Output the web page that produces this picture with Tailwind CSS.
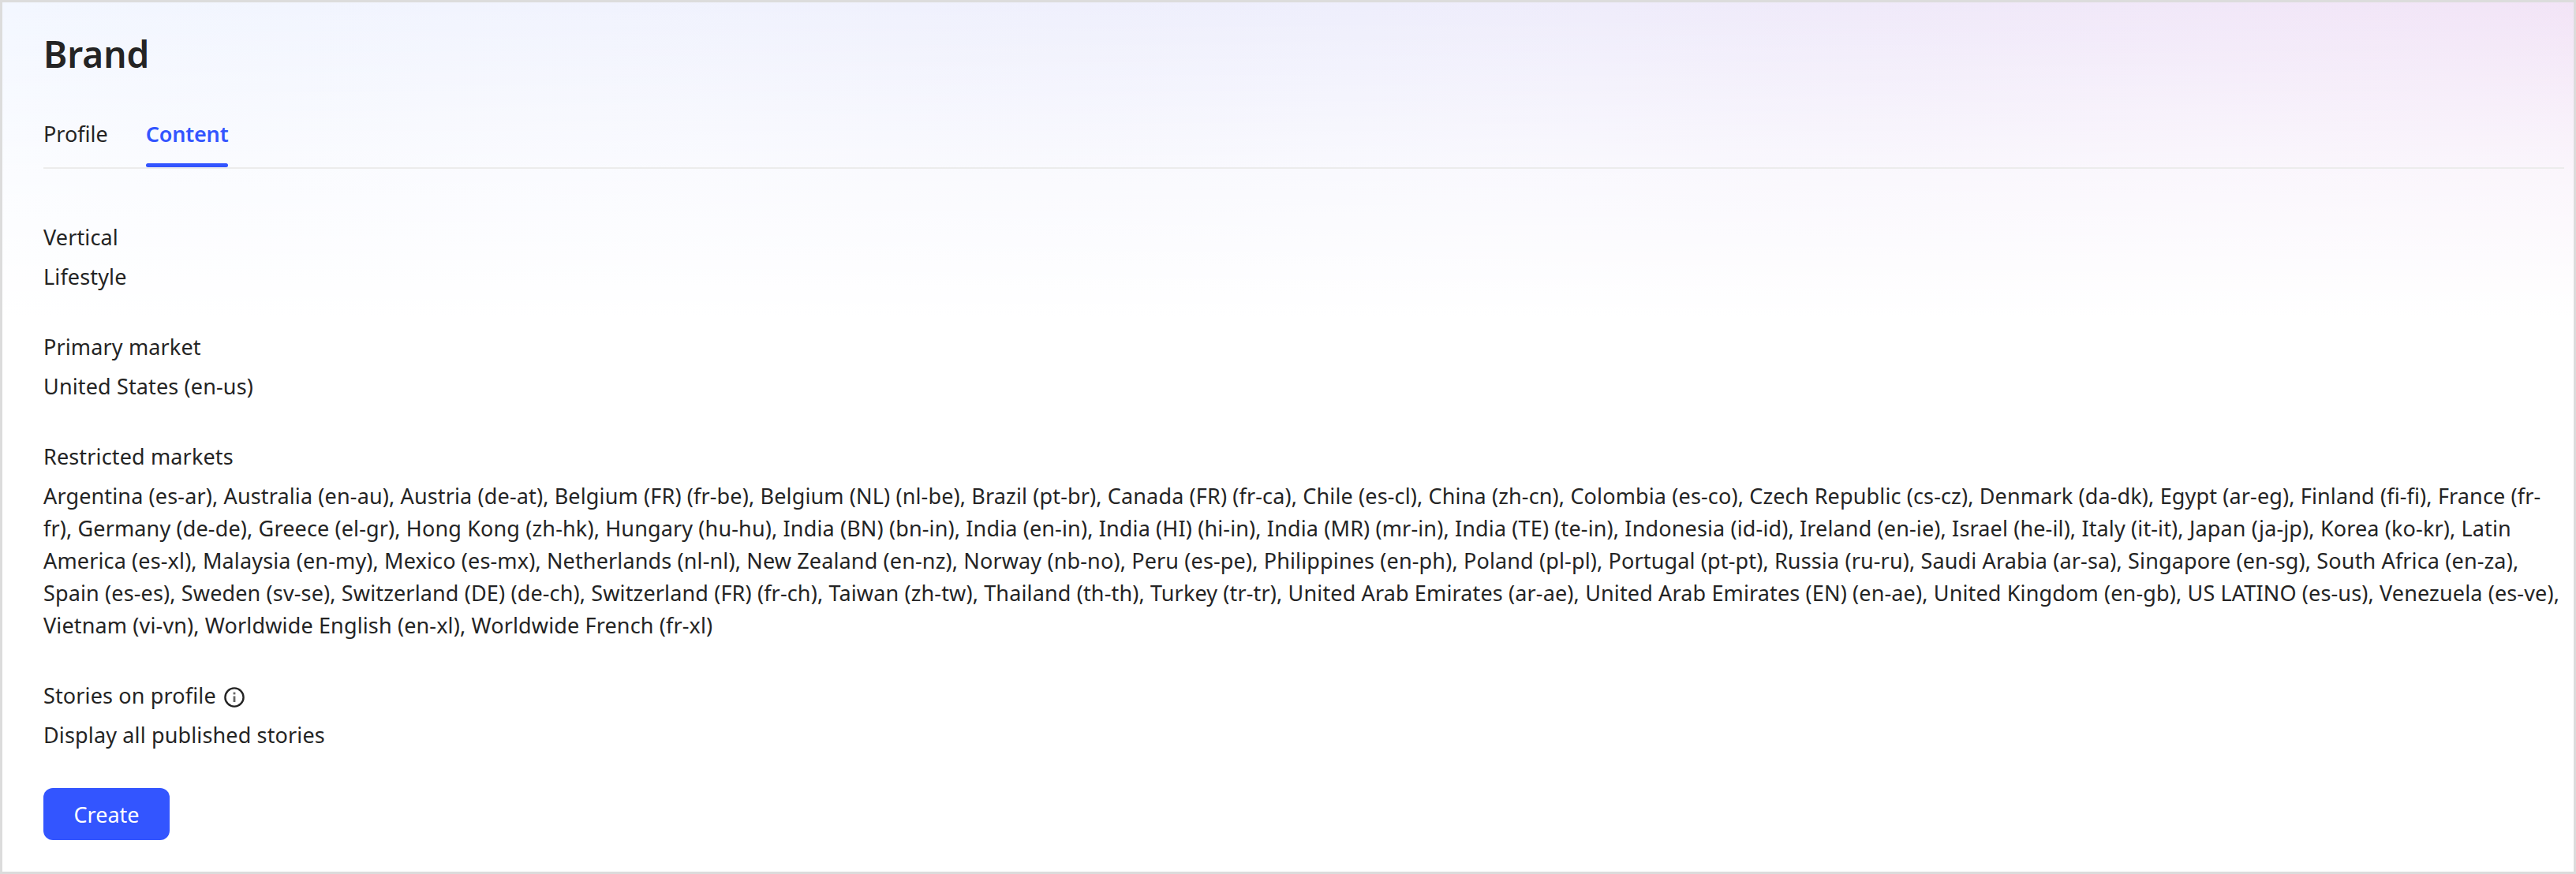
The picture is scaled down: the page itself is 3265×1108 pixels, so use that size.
<!DOCTYPE html>
<html lang="en">
<head>
    <meta charset="UTF-8">
    <title>Brand</title>
    <script src="https://cdn.jsdelivr.net/npm/@tailwindcss/browser@4"></script>
</head>
<body class="bg-white">
<div class="h-[1108px] border-[3px] border-[#dcdcdc] font-['Noto_Sans',sans-serif] text-[#242424] bg-[linear-gradient(to_bottom,transparent,#ffffffa6_212px,white_400px),linear-gradient(100deg,#f3f7ff,#eeeefc_50%,#f3e3f6)]">
    <div class="pl-[52px] pr-[12px]">
        <h1 class="pt-[34px] h-[122px] text-[46px] leading-[62px] font-semibold">Brand</h1>
        <div class="flex gap-12 h-[89px] border-b-2 border-[#ececec] text-[27px]">
            <button class="h-[87px] pt-[3px] leading-[38px] text-left self-start">Profile</button>
            <button class="relative h-[87px] pt-[3px] leading-[38px] text-left self-start font-semibold text-[#3355ff] tracking-[-0.2px]">Content
                <span class="absolute left-0 right-0 bottom-0 h-[5px] rounded-[3px] bg-[#3355ff]"></span>
            </button>
        </div>
        <div class="pt-[66px] text-[27px] leading-[41px] tracking-[0.14px]">
            <div class="mb-[48px]">
                <p class="mb-[9px]">Vertical</p>
                <p>Lifestyle</p>
            </div>
            <div class="mb-[48px]">
                <p class="mb-[9px]">Primary market</p>
                <p>United States (en-us)</p>
            </div>
            <div class="mb-[48px]">
                <p class="mb-[9px]">Restricted markets</p>
                <p>Argentina (es-ar), Australia (en-au), Austria (de-at), Belgium (FR) (fr-be), Belgium (NL) (nl-be), Brazil (pt-br), Canada (FR) (fr-ca), Chile (es-cl), China (zh-cn), Colombia (es-co), Czech Republic (cs-cz), Denmark (da-dk), Egypt (ar-eg), Finland (fi-fi), France (fr-fr), Germany (de-de), Greece (el-gr), Hong Kong (zh-hk), Hungary (hu-hu), India (BN) (bn-in), India (en-in), India (HI) (hi-in), India (MR) (mr-in), India (TE) (te-in), Indonesia (id-id), Ireland (en-ie), Israel (he-il), Italy (it-it), Japan (ja-jp), Korea (ko-kr), Latin America (es-xl), Malaysia (en-my), Mexico (es-mx), Netherlands (nl-nl), New Zealand (en-nz), Norway (nb-no), Peru (es-pe), Philippines (en-ph), Poland (pl-pl), Portugal (pt-pt), Russia (ru-ru), Saudi Arabia (ar-sa), Singapore (en-sg), South Africa (en-za), Spain (es-es), Sweden (sv-se), Switzerland (DE) (de-ch), Switzerland (FR) (fr-ch), Taiwan (zh-tw), Thailand (th-th), Turkey (tr-tr), United Arab Emirates (ar-ae), United Arab Emirates (EN) (en-ae), United Kingdom (en-gb), US LATINO (es-us), Venezuela (es-ve), Vietnam (vi-vn), Worldwide English (en-xl), Worldwide French (fr-xl)</p>
            </div>
            <div>
                <p class="mb-[9px] flex items-center gap-[9px]">Stories on profile
                    <svg class="w-[28px] h-[28px] mt-[4px]" viewBox="0 0 28 28" fill="none">
                        <circle cx="14" cy="14" r="11.6" stroke="#242424" stroke-width="2.4"/>
                        <rect x="12.6" y="12.5" width="2.8" height="7.5" fill="#666"/>
                        <rect x="12.6" y="7.6" width="2.8" height="2.8" fill="#666"/>
                    </svg>
                </p>
                <p>Display all published stories</p>
            </div>
        </div>
        <button class="block mt-[47px] w-[160px] h-[66px] pt-[2px] rounded-[12px] bg-[#3355ff] text-white text-[27px]">Create</button>
    </div>
</div>
</body>
</html>
